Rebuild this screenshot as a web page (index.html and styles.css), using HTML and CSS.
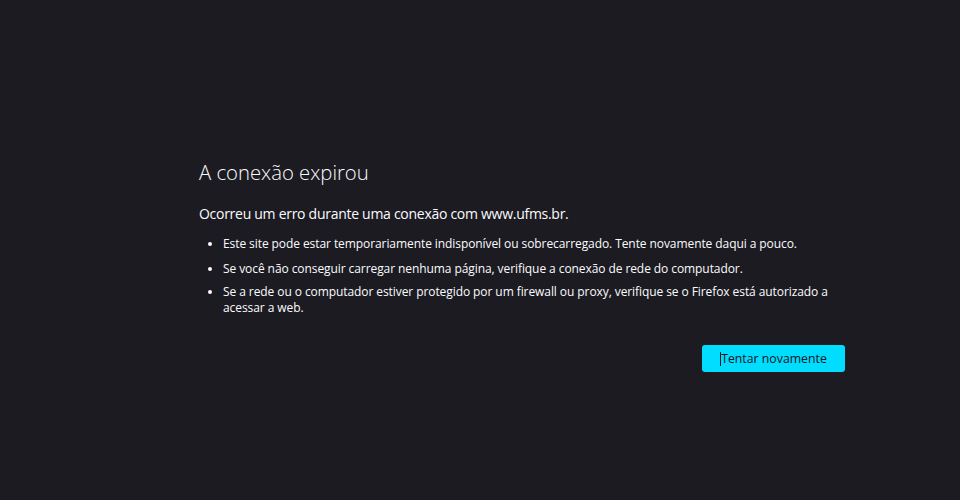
FILE: index.html
```html
<!DOCTYPE html>
<html lang="pt-BR">
<head>
<meta charset="utf-8">
<title>Problema ao carregar a página</title>
<link rel="stylesheet" href="styles.css">
</head>
<body>
<main class="container">
  <h1 class="title">A conexão expirou</h1>
  <p class="lead">Ocorreu um erro durante uma conexão com www.ufms.br.</p>
  <ul class="tips">
    <li>Este site pode estar temporariamente indisponível ou sobrecarregado. Tente novamente daqui a pouco.</li>
    <li>Se você não conseguir carregar nenhuma página, verifique a conexão de rede do computador.</li>
    <li>Se a rede ou o computador estiver protegido por um firewall ou proxy, verifique se o Firefox está autorizado a acessar a web.</li>
  </ul>
  <div class="actions">
    <button class="retry"><span class="caret"></span>Tentar novamente</button>
  </div>
</main>
</body>
</html>
```

FILE: styles.css
```css
html, body {
  margin: 0;
  height: 100%;
}
body {
  background: #1c1b22;
  color: #fbfbfe;
  font-family: "Open Sans", "Noto Sans", sans-serif;
  display: flex;
  align-items: center;
}
.container {
  width: 646px;
  margin-left: 199px;
  padding-top: 30px;
}
.title {
  font-size: 20.3px;
  font-weight: 300;
  margin: 0 0 18px;
  line-height: 28px;
}
.lead {
  font-size: 14px;
  letter-spacing: -0.28px;
  margin: 0 0 12px;
  line-height: 20px;
}
.tips {
  margin: 0;
  padding-left: 24px;
  font-size: 12px;
  letter-spacing: -0.08px;
  line-height: 16px;
}
.tips li {
  margin-bottom: 8px;
}
.tips li:first-child {
  margin-bottom: 9px;
}
.tips li:nth-child(2) {
  margin-bottom: 7px;
}
.actions {
  display: flex;
  justify-content: flex-end;
  margin-top: 29px;
}
.retry {
  background: #00ddff;
  color: #15141a;
  border: none;
  border-radius: 3px;
  height: 27px;
  width: 143px;
  font-family: inherit;
  font-size: 12.3px;
  padding: 0;
  display: flex;
  align-items: center;
  justify-content: center;
}
.caret {
  width: 1px;
  height: 14px;
  background: #15141a;
}
```
